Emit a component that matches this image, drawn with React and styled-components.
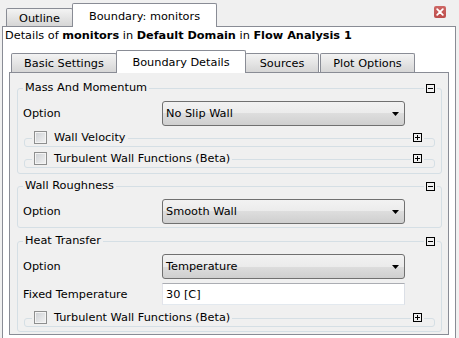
import React from 'react';
import styled, { createGlobalStyle } from 'styled-components';

const Global = createGlobalStyle`
  html, body { margin: 0; padding: 0; background: #f0f0f0; }
  body { font-family: "DejaVu Sans", "Noto Sans", sans-serif; font-size: 11.3px; color: #000; }
  * { box-sizing: border-box; }
`;

const Window = styled.div`
  width: 459px;
  height: 338px;
  overflow: hidden;
  background: #f0f0f0;
  display: flex;
  flex-direction: column;
`;

const TopBar = styled.div`
  display: flex;
  align-items: flex-end;
  height: 26px;
  flex: none;
  padding: 0 13px 0 6px;
  position: relative;
  z-index: 1;
`;

const Tab = styled.div`
  display: flex;
  align-items: center;
  justify-content: center;
  flex: none;
  white-space: nowrap;
  width: ${p => p.$w}px;
  height: ${p => p.$h}px;
  margin-left: ${p => (p.$first ? 0 : p.$gap ?? -1)}px;
  margin-bottom: ${p => (p.$active ? -1 : 0)}px;
  padding-top: 1px;
  border: 1px solid #898c95;
  border-bottom: none;
  border-radius: 2px 2px 0 0;
  background: ${p => (p.$active ? '#ffffff' : 'linear-gradient(#f3f3f3, #d6d6d6)')};
  position: relative;
  z-index: ${p => (p.$active ? 2 : 1)};
`;

const CloseButton = styled.div`
  margin-left: auto;
  align-self: flex-start;
  margin-top: 6px;
  width: 12px;
  height: 12px;
  border-radius: 2px;
  background: linear-gradient(#cd6664, #bd4d4b);
  display: flex;
  align-items: center;
  justify-content: center;
`;

const OuterPanel = styled.div`
  margin-left: 2px;
  width: 454px;
  flex: 1;
  background: #ffffff;
  border: 1px solid #898c95;
  border-bottom: none;
  display: flex;
  flex-direction: column;
`;

const Details = styled.div`
  height: 18px;
  line-height: 18px;
  padding-left: 2px;
  white-space: nowrap;
  b { font-weight: bold; }
`;

const InnerTabBar = styled.div`
  display: flex;
  align-items: flex-end;
  height: 27px;
  padding-left: 8px;
  position: relative;
  z-index: 1;
`;

const InnerPanel = styled.div`
  margin-left: 6px;
  width: 440px;
  height: 263px;
  border: 1px solid #898c95;
  background: #f0f0f0;
  padding: 15px 6px 0 7px;
`;

const Group = styled.div`
  margin-top: ${p => p.$mt || 0}px;
  border: 1px solid #d5dfe5;
  border-radius: 3px;
  padding: 0 0 ${p => p.$pb}px 4px;
`;

const GroupHeader = styled.div`
  display: flex;
  align-items: center;
  justify-content: space-between;
  height: 14px;
  margin-top: -8px;
  padding: 0 4px 0 1px;
`;

const GroupTitle = styled.span`
  background: #f0f0f0;
  padding: 0 2px;
  line-height: 14px;
  white-space: nowrap;
`;

const ToggleWrap = styled.span`
  display: flex;
  background: #f0f0f0;
  padding: 0 2px;
`;

const Row = styled.div`
  display: grid;
  grid-template-columns: 140px 243px;
  align-items: center;
  margin-top: ${p => p.$mt}px;
`;

const Label = styled.span`
  padding-left: 1px;
  white-space: nowrap;
`;

const Combo = styled.div`
  height: 25px;
  border: 1px solid #707070;
  border-radius: 3px;
  background: linear-gradient(#f2f2f2 0%, #ebebeb 50%, #dddddd 50%, #cfcfcf 100%);
  display: flex;
  align-items: center;
  padding: 0 5px 0 3px;
`;

const ComboText = styled.span`
  flex: 1;
  white-space: nowrap;
`;

const TextBox = styled.div`
  height: 22px;
  border: 1px solid;
  border-color: #abadb3 #dbdfe6 #e3e9ef #e2e3ea;
  background: #ffffff;
  display: flex;
  align-items: center;
  padding-left: 3px;
`;

const SubGroup = styled.div`
  margin: ${p => p.$mt}px 6px 0 2px;
  height: 9px;
  border: 1px solid #d5dfe5;
  border-radius: 3px;
`;

const SubHeader = styled.div`
  display: flex;
  align-items: center;
  justify-content: space-between;
  height: 15px;
  margin-top: -9px;
  padding: 0 10px 0 7px;
`;

const CheckTitle = styled.span`
  display: flex;
  align-items: center;
  background: #f0f0f0;
  padding: 0 2px;
  white-space: nowrap;
`;

const CheckBox = styled.span`
  width: 13px;
  height: 13px;
  flex: none;
  border: 1px solid #8e8f8f;
  box-shadow: inset 0 0 0 1px #f4f4f4;
  background: linear-gradient(135deg, #cdd0d4, #f3f3f3);
  margin-right: 7px;
`;

const Arrow = () => (
  <svg width="7" height="4" viewBox="0 0 7 4">
    <path d="M0 0H7L3.5 4Z" fill="#000" />
  </svg>
);

const Toggle = ({ open }) => (
  <svg width="9" height="9" viewBox="0 0 9 9">
    <rect x="0.5" y="0.5" width="8" height="8" fill="none" stroke="#000" />
    <path d="M2 4.5H7" stroke="#000" />
    {!open && <path d="M4.5 2V7" stroke="#000" />}
  </svg>
);

const CloseIcon = () => (
  <svg width="8" height="8" viewBox="0 0 8 8">
    <path d="M1.2 1.2L6.8 6.8M6.8 1.2L1.2 6.8" stroke="#fff" strokeWidth="1.8" strokeLinecap="round" />
  </svg>
);

const Select = ({ value }) => (
  <Combo>
    <ComboText>{value}</ComboText>
    <Arrow />
  </Combo>
);

const CheckGroup = ({ label, mt }) => (
  <SubGroup $mt={mt}>
    <SubHeader>
      <CheckTitle>
        <CheckBox />
        {label}
      </CheckTitle>
      <ToggleWrap>
        <Toggle open={false} />
      </ToggleWrap>
    </SubHeader>
  </SubGroup>
);

const GroupBox = ({ title, mt, pb, children }) => (
  <Group $mt={mt} $pb={pb}>
    <GroupHeader>
      <GroupTitle>{title}</GroupTitle>
      <ToggleWrap>
        <Toggle open />
      </ToggleWrap>
    </GroupHeader>
    {children}
  </Group>
);

export default function App() {
  return (
    <>
      <Global />
      <Window>
        <TopBar>
          <Tab $first $w={67} $h={18}>Outline</Tab>
          <Tab $active $w={145} $h={24}>Boundary: monitors</Tab>
          <CloseButton>
            <CloseIcon />
          </CloseButton>
        </TopBar>
        <OuterPanel>
          <Details>
            Details of <b>monitors</b> in <b>Default Domain</b> in <b>Flow Analysis 1</b>
          </Details>
          <InnerTabBar>
            <Tab $first $w={106} $h={19}>Basic Settings</Tab>
            <Tab $active $w={130} $h={23}>Boundary Details</Tab>
            <Tab $w={74} $h={19}>Sources</Tab>
            <Tab $gap={1} $w={95} $h={19}>Plot Options</Tab>
          </InnerTabBar>
          <InnerPanel>
            <GroupBox title="Mass And Momentum" pb={5}>
              <Row $mt={6}>
                <Label>Option</Label>
                <Select value="No Slip Wall" />
              </Row>
              <CheckGroup label="Wall Velocity" mt={12} />
              <CheckGroup label="Turbulent Wall Functions (Beta)" mt={12} />
            </GroupBox>
            <GroupBox title="Wall Roughness" mt={12} pb={3}>
              <Row $mt={6}>
                <Label>Option</Label>
                <Select value="Smooth Wall" />
              </Row>
            </GroupBox>
            <GroupBox title="Heat Transfer" mt={13} pb={4}>
              <Row $mt={6}>
                <Label>Option</Label>
                <Select value="Temperature" />
              </Row>
              <Row $mt={4}>
                <Label>Fixed Temperature</Label>
                <TextBox>30 [C]</TextBox>
              </Row>
              <CheckGroup label="Turbulent Wall Functions (Beta)" mt={13} />
            </GroupBox>
          </InnerPanel>
        </OuterPanel>
      </Window>
    </>
  );
}
